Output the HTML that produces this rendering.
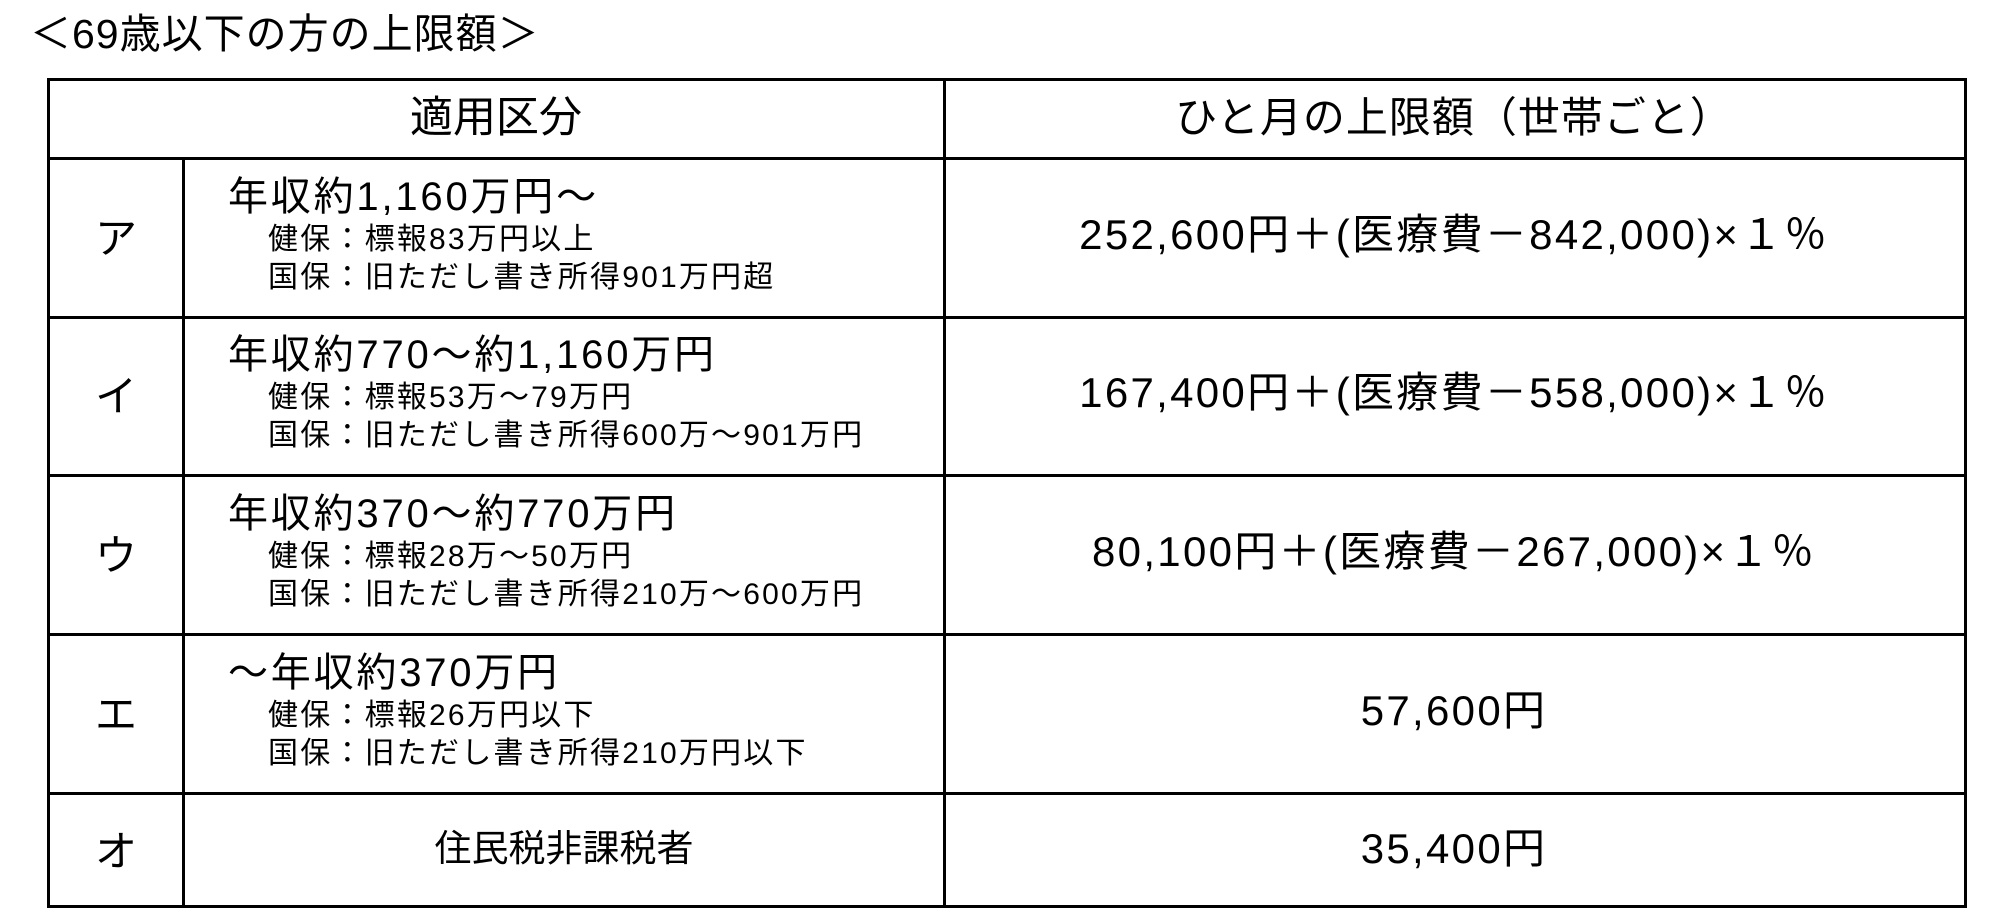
<!DOCTYPE html>
<html><head><meta charset="utf-8"><style>
body{margin:0;width:1992px;height:924px;background:#fff;position:relative;font-family:"Liberation Sans","Noto Sans CJK JP",sans-serif;color:#000;overflow:hidden}
.a{position:absolute;white-space:nowrap;line-height:1}
.h{position:absolute;background:#000;height:3px}
.v{position:absolute;background:#000;width:3px}
.m{font-size:40px;letter-spacing:2.8px}
.s{font-size:30px;letter-spacing:2.2px}
.r{font-size:42px;letter-spacing:2.3px;text-align:center;width:1020px;left:944px}
.k{font-size:42px;text-align:center;width:136px;left:48px}
</style></head><body>
<div class="a" style="left:30px;top:14px;font-size:41px;letter-spacing:1px">＜69歳以下の方の上限額＞</div>
<div class="h" style="left:48px;top:78px;width:1919px"></div>
<div class="h" style="left:48px;top:157px;width:1919px"></div>
<div class="h" style="left:48px;top:316px;width:1919px"></div>
<div class="h" style="left:48px;top:474px;width:1919px"></div>
<div class="h" style="left:48px;top:633px;width:1919px"></div>
<div class="h" style="left:48px;top:792px;width:1919px"></div>
<div class="h" style="left:48px;top:905px;width:1919px"></div>
<div class="v" style="left:47px;top:78px;height:830px"></div>
<div class="v" style="left:1964px;top:78px;height:830px"></div>
<div class="v" style="left:943px;top:78px;height:830px"></div>
<div class="v" style="left:182px;top:157px;height:751px"></div>
<div class="a" style="left:48px;width:896px;text-align:center;top:97px;font-size:43px">適用区分</div>
<div class="a r" style="top:97px;font-size:42px;letter-spacing:1px">ひと月の上限額（世帯ごと）</div>

<div class="a k" style="top:218px">ア</div>
<div class="a m" style="left:228px;top:177px">年収約1,160万円～</div>
<div class="a s" style="left:268px;top:225px">健保：標報83万円以上</div>
<div class="a s" style="left:268px;top:263px">国保：旧ただし書き所得901万円超</div>
<div class="a r" style="top:214px">252,600円＋(医療費－842,000)×１％</div>

<div class="a k" style="top:376px">イ</div>
<div class="a m" style="left:228px;top:335px">年収約770～約1,160万円</div>
<div class="a s" style="left:268px;top:383px">健保：標報53万～79万円</div>
<div class="a s" style="left:268px;top:421px">国保：旧ただし書き所得600万～901万円</div>
<div class="a r" style="top:372px">167,400円＋(医療費－558,000)×１％</div>

<div class="a k" style="top:535px">ウ</div>
<div class="a m" style="left:228px;top:494px">年収約370～約770万円</div>
<div class="a s" style="left:268px;top:542px">健保：標報28万～50万円</div>
<div class="a s" style="left:268px;top:580px">国保：旧ただし書き所得210万～600万円</div>
<div class="a r" style="top:531px">80,100円＋(医療費－267,000)×１％</div>

<div class="a k" style="top:694px">エ</div>
<div class="a m" style="left:228px;top:653px">～年収約370万円</div>
<div class="a s" style="left:268px;top:701px">健保：標報26万円以下</div>
<div class="a s" style="left:268px;top:739px">国保：旧ただし書き所得210万円以下</div>
<div class="a r" style="top:690px">57,600円</div>

<div class="a k" style="top:831px">オ</div>
<div class="a" style="left:184px;width:760px;text-align:center;top:830px;font-size:37px">住民税非課税者</div>
<div class="a r" style="top:828px">35,400円</div>
</body></html>
